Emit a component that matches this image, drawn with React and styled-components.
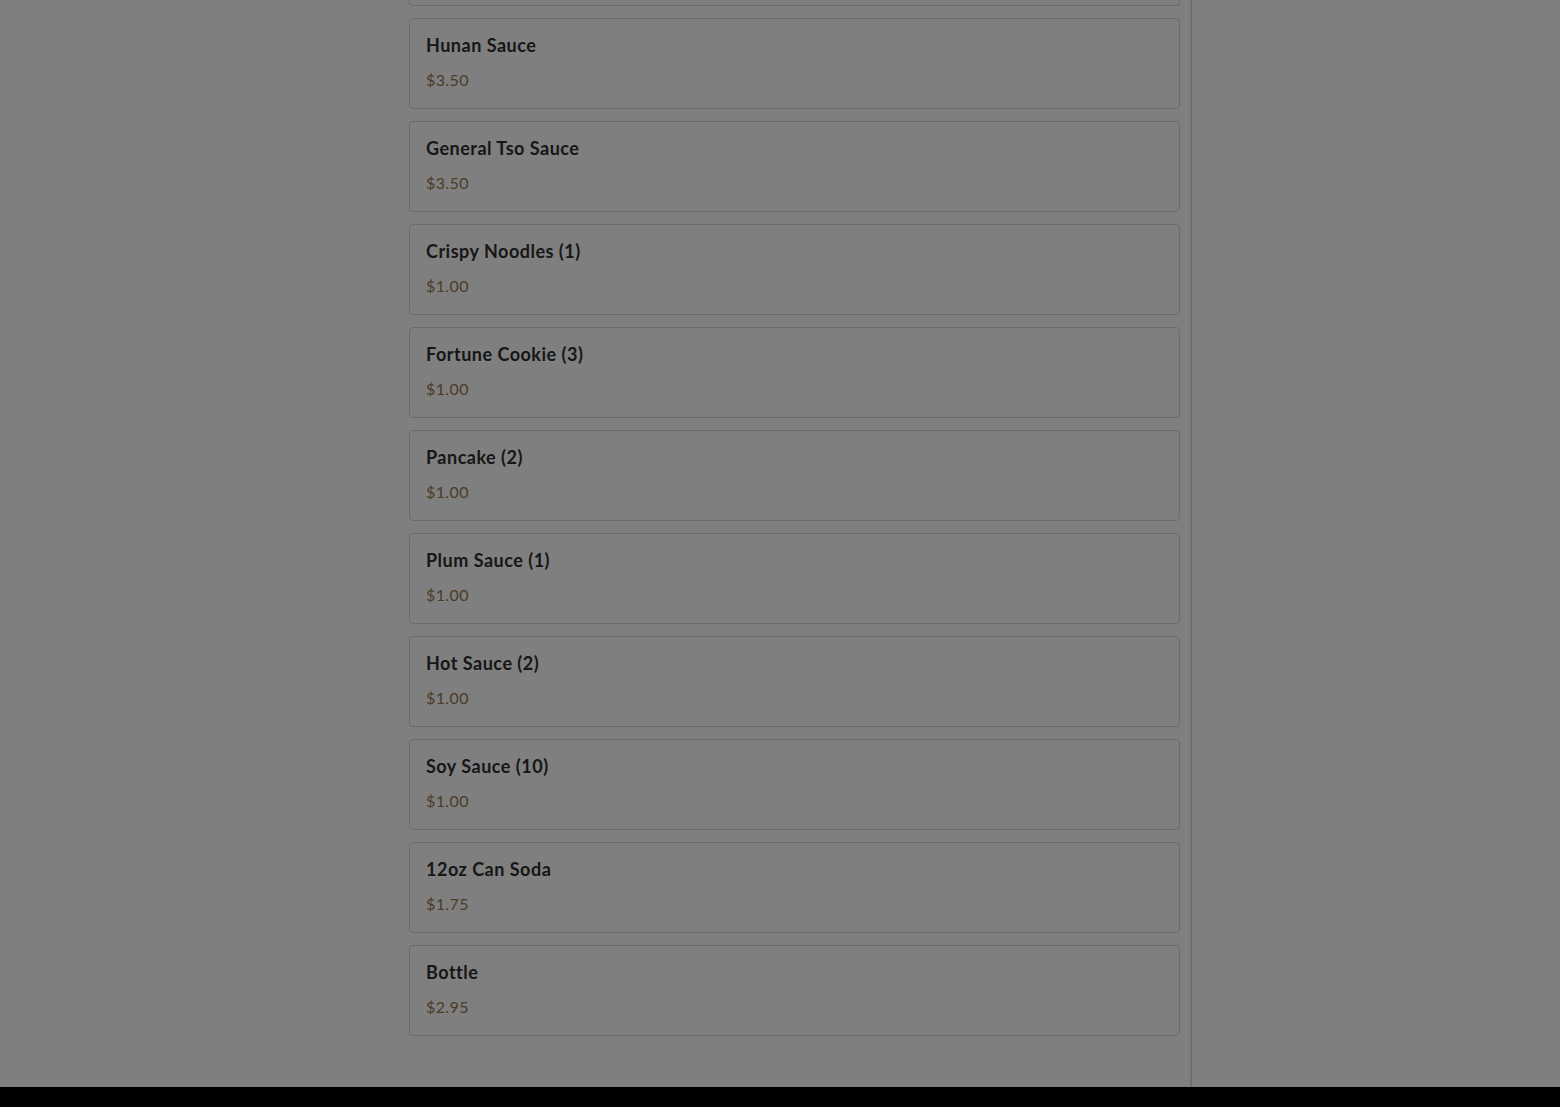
import React from "react";
import styled, { createGlobalStyle, css } from "styled-components";

const items = [
  { name: "Hunan Sauce", price: "$3.50" },
  { name: "General Tso Sauce", price: "$3.50" },
  { name: "Crispy Noodles (1)", price: "$1.00" },
  { name: "Fortune Cookie (3)", price: "$1.00" },
  { name: "Pancake (2)", price: "$1.00" },
  { name: "Plum Sauce (1)", price: "$1.00" },
  { name: "Hot Sauce (2)", price: "$1.00" },
  { name: "Soy Sauce (10)", price: "$1.00" },
  { name: "12oz Can Soda", price: "$1.75" },
  { name: "Bottle", price: "$2.95" },
];

export default function App() {
  return (
    <>
      <GlobalStyle />
      <Page>
        <Main>
          <ItemList>
            {/* bottom edge of the card scrolled above the view */}
            <ItemCard peek />
            {items.map((item, index) => (
              <ItemCard key={index}>
                <ItemName>{item.name}</ItemName>
                <ItemPrice>{item.price}</ItemPrice>
              </ItemCard>
            ))}
          </ItemList>
        </Main>
      </Page>
      <Overlay />
      <SheetEdge />
    </>
  );
}

const GlobalStyle = createGlobalStyle`
  html, body {
    margin: 0;
    padding: 0;
    background: #ffffff;
    font-family: "Lato", "Noto Sans", sans-serif;
    overflow: hidden;
  }
  * {
    box-sizing: border-box;
  }
`;

const Page = styled.div`
  display: flex;
  height: 100vh;
  overflow: hidden;
`;

const Main = styled.main`
  width: 1192px;
  min-height: 100vh;
  padding: 0 11px 0 409px;
  border-right: 1px solid #d2d2d2;
  box-shadow: inset -6px 0 0 -5px #ececec;
`;

const ItemList = styled.div`
  display: flex;
  flex-direction: column;
  gap: 12px;
`;

const ItemCard = styled.div`
  height: 91px;
  padding: 15px 16px 17px;
  border: 1px solid #d6d6d6;
  border-radius: 4px;
  background: #ffffff;
  display: flex;
  flex-direction: column;
  gap: 13px;
  ${(props) =>
    props.peek &&
    css`
      height: 6px;
      padding: 0;
      border-top: none;
      border-radius: 0 0 4px 4px;
    `}
`;

const ItemName = styled.div`
  font-weight: 700;
  font-size: 18px;
  line-height: 22px;
  letter-spacing: 0.5px;
  color: #2e2e2e;
`;

const ItemPrice = styled.div`
  font-size: 16px;
  line-height: 22px;
  letter-spacing: 0.4px;
  color: #98784a;
`;

const Overlay = styled.div`
  position: fixed;
  inset: 0;
  background: rgba(0, 0, 0, 0.5);
`;

const SheetEdge = styled.div`
  position: fixed;
  left: 0;
  right: 0;
  bottom: 0;
  height: 20px;
  background: #000000;
`;
